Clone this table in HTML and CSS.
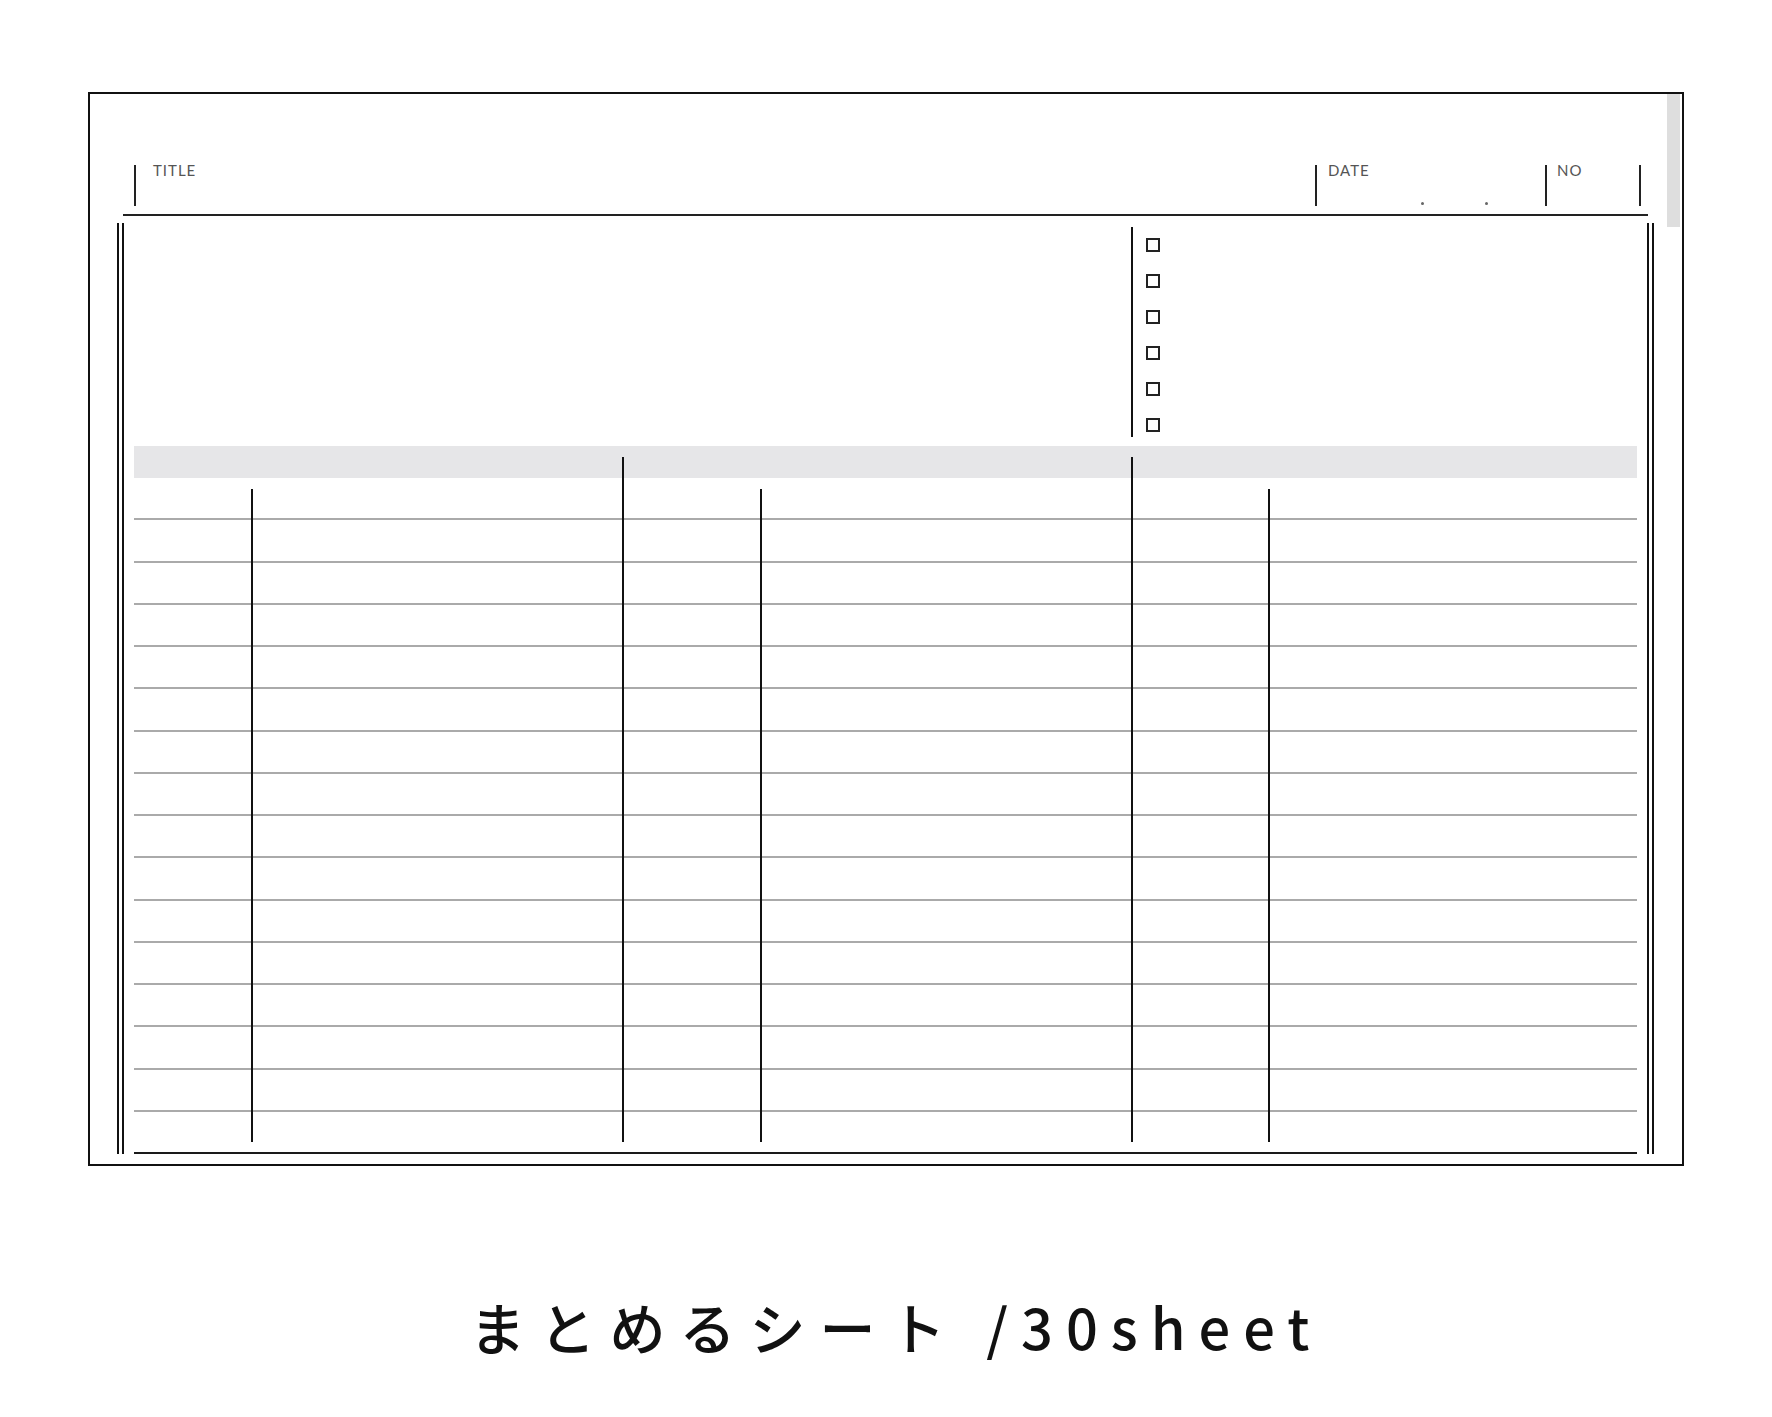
FILE: index.html
```html
<!DOCTYPE html>
<html lang="ja">
<head>
<meta charset="utf-8">
<title>まとめるシート</title>
<link rel="stylesheet" href="styles.css">
</head>
<body>
<div class="page">
  <div class="frame">
    <div class="scroll"></div>
    <div class="head">
      <div class="field f-title"><span class="label">TITLE</span></div>
      <div class="field f-date"><span class="label">DATE</span><div class="dots"><i></i><i></i></div></div>
      <div class="field f-no"><span class="label">NO</span></div>
    </div>
    <div class="title-rule"></div>
    <div class="sheet">
      <div class="sheet-in">
        <div class="top">
          <div class="memo"></div>
          <ul class="checks"><li></li><li></li><li></li><li></li><li></li><li></li></ul>
        </div>
        <div class="table">
          <div class="band"></div>
          <div class="rows">
            <div class="row"></div><div class="row"></div><div class="row"></div><div class="row"></div>
            <div class="row"></div><div class="row"></div><div class="row"></div><div class="row"></div>
            <div class="row"></div><div class="row"></div><div class="row"></div><div class="row"></div>
            <div class="row"></div><div class="row"></div><div class="row"></div><div class="row last"></div>
          </div>
          <div class="cols">
            <div class="col"></div>
            <div class="col narrow"></div>
            <div class="col group"></div>
            <div class="col narrow"></div>
            <div class="col group"></div>
            <div class="col narrow"></div>
          </div>
        </div>
      </div>
    </div>
  </div>
  <p class="caption">まとめるシート <span class="latin">/30sheet</span></p>
</div>
</body>
</html>
```

FILE: styles.css
```css
html, body {
  margin: 0;
  background: #fff;
}

.page {
  padding-top: 92px;
  font-family: "Lato", "Noto Sans", sans-serif;
}

.frame {
  position: relative;
  width: 1596px;
  height: 1074px;
  margin-left: 88px;
  box-sizing: border-box;
  border: 2px solid #111;
}

.scroll {
  position: absolute;
  top: 0;
  right: 2px;
  width: 13px;
  height: 133px;
  background: #dedede;
}

.head {
  display: flex;
  padding: 71px 0 0 44px;
}

.field {
  height: 41px;
  box-sizing: border-box;
  border-left: 2px solid #222;
}

.f-title {
  width: 1181px;
  padding-left: 17px;
}

.f-date {
  width: 230px;
  padding-left: 11px;
  display: flex;
  flex-direction: column;
}

.f-no {
  width: 96px;
  padding-left: 10px;
  border-right: 2px solid #222;
}

.label {
  display: block;
  margin-top: -2px;
  font-size: 15px;
  line-height: 15px;
  letter-spacing: 1px;
  color: #555;
}

.dots {
  display: flex;
  gap: 61px;
  margin-top: auto;
  padding-left: 93px;
  padding-bottom: 1px;
}

.dots i {
  display: block;
  width: 3px;
  height: 3px;
  border-radius: 50%;
  background: #666;
}

.title-rule {
  width: 1525px;
  height: 2px;
  margin: 8px 0 0 33px;
  background: #222;
}

.sheet {
  width: 1537px;
  margin: 7px 0 0 27px;
  box-sizing: border-box;
  padding: 0 3px;
  border-left: 2px solid #111;
  border-right: 2px solid #111;
}

.sheet-in {
  padding: 4px 10px 0 10px;
  border-left: 2px solid #111;
  border-right: 2px solid #111;
}

.top {
  display: flex;
  height: 210px;
}

.memo {
  width: 997px;
  flex: none;
}

.checks {
  margin: 0;
  padding: 11px 0 0 13px;
  list-style: none;
  border-left: 2px solid #111;
  display: flex;
  flex-direction: column;
  gap: 22px;
}

.checks li {
  width: 14px;
  height: 14px;
  box-sizing: border-box;
  border: 2px solid #222;
}

.table {
  position: relative;
  margin-top: 9px;
}

.band {
  height: 32px;
  background: #e6e6e8;
}

.row {
  height: 42.25px;
  box-sizing: border-box;
  border-bottom: 2px solid #aaaaaa;
}

.row.last {
  border-bottom-color: #1a1a1a;
}

.cols {
  position: absolute;
  inset: 0;
  display: grid;
  grid-template-columns: 117px 371px 138px 371px 137px 369px;
  pointer-events: none;
}

.col {
  position: relative;
}

.col.narrow::before,
.col.group::before {
  content: "";
  position: absolute;
  left: 0;
  width: 2px;
  bottom: 12px;
  background: #111;
}

.col.narrow::before {
  top: 43px;
}

.col.group::before {
  top: 11px;
}

.caption {
  margin: 120px 0 0 0;
  padding-left: 20px;
  text-align: center;
  font-family: "Noto Sans CJK JP", "Noto Sans", sans-serif;
  font-weight: 500;
  font-size: 56px;
  line-height: 80px;
  letter-spacing: 14px;
  color: #111;
}

.caption .latin {
  letter-spacing: 13px;
}
```
